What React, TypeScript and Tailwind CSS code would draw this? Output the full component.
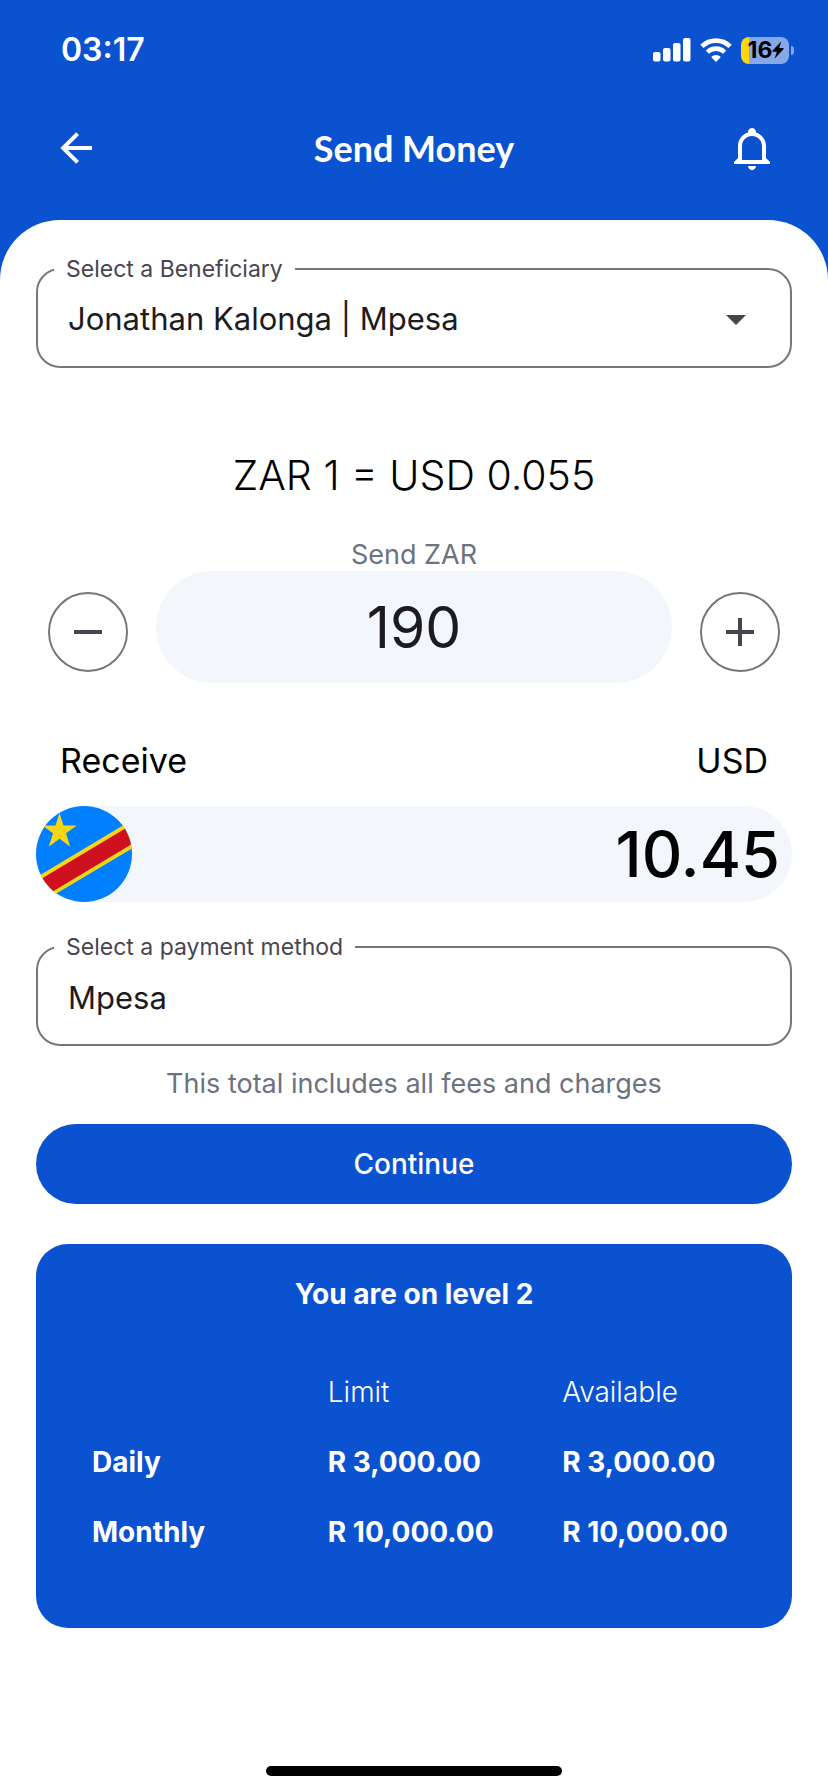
import { useState } from "react";
import type { ReactNode } from "react";

const RATE = 0.055;

const beneficiaries = ["Jonathan Kalonga | Mpesa"];

const limits = [
  { period: "Daily", limit: "R 3,000.00", available: "R 3,000.00" },
  { period: "Monthly", limit: "R 10,000.00", available: "R 10,000.00" },
];

function StatusBar() {
  return (
    <div className="flex items-center justify-between pt-[30px] pr-[34px] pl-[61px] text-white">
      <span className="text-[32px] leading-10 font-semibold">03:17</span>
      <div className="flex items-center gap-[9px]">
        <svg className="h-6 w-[38px]" viewBox="0 0 38 24" fill="currentColor" aria-hidden="true">
          <rect x="0" y="14" width="7.5" height="9.5" rx="2" />
          <rect x="10" y="10" width="7.5" height="13.5" rx="2" />
          <rect x="20" y="5" width="7.5" height="18.5" rx="2" />
          <rect x="30" y="0" width="7.5" height="23.5" rx="2" />
        </svg>
        <svg className="h-6 w-8" viewBox="0 0 32 24" fill="none" stroke="currentColor" aria-hidden="true">
          <path d="M1.9 8.4 A20 20 0 0 1 30.1 8.4" strokeWidth="4.6" />
          <path d="M7.3 14.2 A12.4 12.4 0 0 1 24.7 14.2" strokeWidth="4.6" />
          <path d="M16 24 L11.1 18.9 A7.2 7.2 0 0 1 20.9 18.9 Z" fill="currentColor" stroke="none" />
        </svg>
        <div className="flex items-center gap-[2px]">
          <div className="flex h-[27px] w-12 items-center justify-center overflow-hidden rounded-[8px] bg-linear-to-r from-[#ffd60a] from-[17%] to-[#86a8e7] to-[17%] pl-[2px] text-black">
            <span className="text-[23px] leading-6 font-bold">16</span>
            <svg className="h-[18px] w-3" viewBox="0 0 12 18" fill="currentColor" aria-hidden="true">
              <path d="M9.4 0.2 L0.4 9.8 Q0 10.8 0.9 10.8 H4.8 L2.6 17.8 L11.6 8 Q12 7 11.1 7 H7.2 Z" />
            </svg>
          </div>
          <div className="h-[9px] w-[3px] rounded-r-full bg-[#86a8e7]" />
        </div>
      </div>
    </div>
  );
}

function Field({ id, label, children }: { id: string; label: string; children: ReactNode }) {
  return (
    <fieldset className="min-w-0 rounded-3xl border-2 border-[#79747e]">
      <legend className="ml-4 px-3 text-[23px] leading-6 text-[#49454f]">
        <label htmlFor={id}>{label}</label>
      </legend>
      <div className="relative flex pb-2">{children}</div>
    </fieldset>
  );
}

function StepButton({ label, path, onClick }: { label: string; path: string; onClick: () => void }) {
  return (
    <button
      type="button"
      aria-label={label}
      onClick={onClick}
      className="mb-[11px] flex size-20 shrink-0 items-center justify-center rounded-full border-2 border-[#79747e] text-[#49454f]"
    >
      <svg className="size-12" viewBox="0 0 24 24" fill="currentColor" aria-hidden="true">
        <path d={path} />
      </svg>
    </button>
  );
}

function CongoFlag() {
  return (
    <svg className="size-24 shrink-0 rounded-full" viewBox="0 0 96 96" role="img" aria-label="DR Congo">
      <rect width="96" height="96" fill="#007fff" />
      <path d="M-4 74 L100 11.500 V40 L-4 102 Z" fill="#f7d618" />
      <path d="M-4 78.500 L100 16 V35.500 L-4 98 Z" fill="#ce1021" />
      <path
        d="M23.500 7 L27.500 19.500 H40.700 L30 27.200 L34.200 40.700 L23.500 32.800 L12.800 40.700 L17 27.200 L6.300 19.500 H19.500 Z"
        fill="#f7d618"
      />
    </svg>
  );
}

export default function App() {
  const [amount, setAmount] = useState(190);

  return (
    <div className="flex min-h-screen flex-col bg-[#0a52cf] font-['Inter',sans-serif]">
      <StatusBar />

      <header className="flex items-center justify-between px-[52px] pt-[54px] pb-12 text-white">
        <button type="button" aria-label="Back">
          <svg className="size-12" viewBox="0 0 24 24" fill="currentColor" aria-hidden="true">
            <path d="M20,11V13H8L13.5,18.5L12.08,19.92L4.16,12L12.08,4.08L13.5,5.5L8,11H20Z" />
          </svg>
        </button>
        <h1 className="font-['Lato',sans-serif] text-[36px] leading-12 font-bold">Send Money</h1>
        <button type="button" aria-label="Notifications">
          <svg className="size-12" viewBox="0 0 24 24" fill="currentColor" aria-hidden="true">
            <path d="M10 21H14C14 22.1 13.1 23 12 23S10 22.1 10 21M21 19V20H3V19L5 17V11C5 7.9 7 5.2 10 4.3V4C10 2.9 10.9 2 12 2S14 2.9 14 4V4.3C17 5.2 19 7.9 19 11V17L21 19M17 11C17 8.2 14.8 6 12 6S7 8.2 7 11V18H17V11Z" />
          </svg>
        </button>
      </header>

      <main className="flex grow flex-col rounded-t-[60px] bg-white px-9 pt-[37px]">
        <Field id="beneficiary" label="Select a Beneficiary">
          <select
            id="beneficiary"
            className="h-[77px] w-full appearance-none bg-transparent px-[30px] text-[31px] text-[#1d1b20]"
          >
            {beneficiaries.map((name) => (
              <option key={name}>{name}</option>
            ))}
          </select>
          <svg
            className="pointer-events-none absolute top-[14px] right-[30px] size-12 text-[#49454f]"
            viewBox="0 0 24 24"
            fill="currentColor"
            aria-hidden="true"
          >
            <path d="M7,10L12,15L17,10H7Z" />
          </svg>
        </Field>

        <p className="pt-[79px] text-center text-[41px] leading-[56px] font-light text-black">ZAR 1 = USD 0.055</p>

        <div className="flex items-end gap-7 px-3 pt-9">
          <StepButton
            label="Decrease amount"
            path="M19,13H5V11H19V13Z"
            onClick={() => setAmount(Math.max(0, amount - 10))}
          />
          <div className="flex min-w-0 grow flex-col">
            <label htmlFor="amount" className="text-center text-[27px] leading-8 text-[#6b7280]">
              Send ZAR
            </label>
            <input
              id="amount"
              inputMode="numeric"
              value={amount}
              onChange={(event) => setAmount(Number(event.target.value) || 0)}
              className="h-28 w-full rounded-full bg-[#f3f6fb] text-center text-[57px] text-[#1d1b20]"
            />
          </div>
          <StepButton
            label="Increase amount"
            path="M19,13H13V19H11V13H5V11H11V5H13V11H19V13Z"
            onClick={() => setAmount(amount + 10)}
          />
        </div>

        <div className="flex justify-between px-6 pt-14 text-[34px] leading-11 text-black">
          <span>Receive</span>
          <span>USD</span>
        </div>

        <div className="mt-[23px] flex items-center justify-between rounded-full bg-[#f3f6fb] pr-3">
          <CongoFlag />
          <output htmlFor="amount" className="text-[63px] leading-none font-medium text-black">
            {(amount * RATE).toFixed(2)}
          </output>
        </div>

        <div className="pt-[33px]">
          <Field id="method" label="Select a payment method">
            <input
              id="method"
              readOnly
              value="Mpesa"
              className="h-[77px] w-full bg-transparent px-[30px] text-[31px] text-[#1d1b20]"
            />
          </Field>
        </div>

        <p className="pt-5 pb-[22px] text-center text-[27px] leading-9 text-[#6b7280]">
          This total includes all fees and charges
        </p>

        <button type="button" className="h-20 w-full shrink-0 rounded-full bg-[#0a52cf] text-[28px] font-medium text-white">
          Continue
        </button>

        <section className="mt-10 rounded-[32px] bg-[#0a52cf] pt-8 pb-[61px] text-[28px] text-white">
          <h2 className="text-center leading-9 font-bold">You are on level 2</h2>
          <table className="mt-[45px] w-full table-fixed text-left">
            <thead>
              <tr className="h-[70px]">
                <td className="w-[38.6%]" />
                <th scope="col" className="w-[31%] font-light">
                  Limit
                </th>
                <th scope="col" className="font-light">
                  Available
                </th>
              </tr>
            </thead>
            <tbody>
              {limits.map((row) => (
                <tr key={row.period} className="h-[70px] font-bold">
                  <th scope="row" className="pl-14 font-bold">
                    {row.period}
                  </th>
                  <td>{row.limit}</td>
                  <td>{row.available}</td>
                </tr>
              ))}
            </tbody>
          </table>
        </section>

        <div className="mt-auto flex justify-center pt-8 pb-4">
          <div className="h-[10px] w-[296px] rounded-full bg-black" />
        </div>
      </main>
    </div>
  );
}
